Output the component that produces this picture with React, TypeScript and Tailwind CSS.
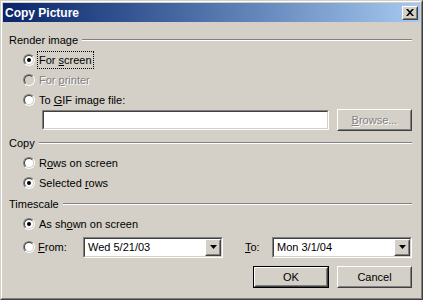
import React from 'react';

// Classic Win2000 dialog bits
const raised = "border border-t-white border-l-white border-r-[#404040] border-b-[#404040]";
const raisedInner = "border border-t-[#d4d0c8] border-l-[#d4d0c8] border-r-[#808080] border-b-[#808080]";
const sunken = "border border-t-[#808080] border-l-[#808080] border-r-white border-b-white";
const sunkenInner = "border border-t-[#404040] border-l-[#404040] border-r-[#d4d0c8] border-b-[#d4d0c8]";

const Radio = ({ checked = false, disabled = false }: { checked?: boolean; disabled?: boolean }) => (
    <div className={`w-[12px] h-[12px] rounded-full shrink-0 ${sunken}`}>
        <div className={`w-full h-full rounded-full flex items-center justify-center ${sunkenInner} ${disabled ? 'bg-[#d4d0c8]' : 'bg-white'}`}>
            {checked && <div className="w-[4px] h-[4px] rounded-full bg-black" />}
        </div>
    </div>
);

const U = ({ children }: { children: React.ReactNode }) => <span className="underline underline-offset-[1px]">{children}</span>;

const Section = ({ label }: { label: string }) => (
    <div className="h-[20px] flex items-center gap-[4px]">
        <span>{label}</span>
        <div className="flex-1 flex flex-col">
            <div className="h-px bg-[#808080]" />
            <div className="h-px bg-white" />
        </div>
    </div>
);

const RadioRow = ({ checked, disabled, focus, children }: { checked?: boolean; disabled?: boolean; focus?: boolean; children: React.ReactNode }) => (
    <div className="h-[20px] flex items-center pl-[14px] gap-[3px]">
        <Radio checked={checked} disabled={disabled} />
        <span className={`px-px ${focus ? 'outline outline-1 outline-dotted outline-black' : ''} ${disabled ? 'text-[#808080] [text-shadow:1px_1px_0_#ffffff]' : ''}`}>{children}</span>
    </div>
);

const Button = ({ children, def = false, disabled = false, w }: { children: React.ReactNode; def?: boolean; disabled?: boolean; w: string }) => (
    <div className={`${w} h-[22px] ${def ? 'border border-black' : ''}`}>
        <div className={`w-full h-full ${raised}`}>
            <div className={`w-full h-full flex items-center justify-center ${raisedInner} ${disabled ? 'text-[#808080] [text-shadow:1px_1px_0_#ffffff]' : ''}`}>
                {children}
            </div>
        </div>
    </div>
);

const Combo = ({ value }: { value: string }) => (
    <div className={`w-[140px] h-[21px] ${sunken}`}>
        <div className={`w-full h-full bg-white flex items-center ${sunkenInner}`}>
            <span className="flex-1 pl-[3px]">{value}</span>
            <div className={`w-[16px] h-[17px] bg-[#d4d0c8] ${raised}`}>
                <div className={`w-full h-full flex items-center justify-center ${raisedInner}`}>
                    <svg width="7" height="4" viewBox="0 0 7 4"><path d="M0 0h7L3.5 4z" fill="#000" /></svg>
                </div>
            </div>
        </div>
    </div>
);

export default function App() {
    return (
        <div className="w-[423px] h-[300px] bg-[#d4d0c8] font-['Liberation_Sans',Arial,sans-serif] text-[11px] text-black border border-t-[#d4d0c8] border-l-[#d4d0c8] border-r-[#404040] border-b-[#404040]">
            <div className="w-full h-full border border-t-white border-l-white border-r-[#808080] border-b-[#808080] p-px flex flex-col">
                <div className="h-[19px] shrink-0 flex items-center justify-between pl-[2px] pr-[2px] bg-gradient-to-r from-[#0a246a] to-[#a6caf0]">
                    <span className="text-white font-bold text-[12px]">Copy Picture</span>
                    <div className={`w-[16px] h-[14px] bg-[#d4d0c8] ${raised}`}>
                        <div className={`w-full h-full flex items-center justify-center ${raisedInner}`}>
                            <svg width="8" height="7" viewBox="0 0 8 7"><path d="M0 0h2l2 2.2L6 0h2L5 3.5 8 7H6L4 4.8 2 7H0l3-3.5z" fill="#000" /></svg>
                        </div>
                    </div>
                </div>
                <div className="flex-1 flex flex-col pt-[8px] pl-[6px] pr-[8px]">
                    <Section label="Render image" />
                    <RadioRow checked focus>For <U>s</U>creen</RadioRow>
                    <RadioRow disabled>For <U>p</U>rinter</RadioRow>
                    <RadioRow>To <U>G</U>IF image file:</RadioRow>
                    <div className="h-[20px] flex items-center pl-[33px] gap-[8px]">
                        <div className={`w-[287px] h-[20px] ${sunken}`}>
                            <div className={`w-full h-full bg-white ${sunkenInner}`} />
                        </div>
                        <Button w="w-[75px]" disabled><span><U>B</U>rowse...</span></Button>
                    </div>
                    <div className="mt-[3px]"><Section label="Copy" /></div>
                    <RadioRow>R<U>o</U>ws on screen</RadioRow>
                    <RadioRow checked>Selected <U>r</U>ows</RadioRow>
                    <div className="mt-px"><Section label="Timescale" /></div>
                    <RadioRow checked>As sh<U>o</U>wn on screen</RadioRow>
                    <div className="h-[22px] mt-[2px] flex items-center pl-[14px]">
                        <Radio />
                        <span className="ml-[3px] w-[45px]"><U>F</U>rom:</span>
                        <Combo value="Wed 5/21/03" />
                        <span className="ml-[22px] w-[27px]"><U>T</U>o:</span>
                        <Combo value="Mon 3/1/04" />
                    </div>
                    <div className="mt-[8px] flex justify-end gap-[8px]">
                        <Button w="w-[76px]" def>OK</Button>
                        <Button w="w-[75px]">Cancel</Button>
                    </div>
                </div>
            </div>
        </div>
    );
}
